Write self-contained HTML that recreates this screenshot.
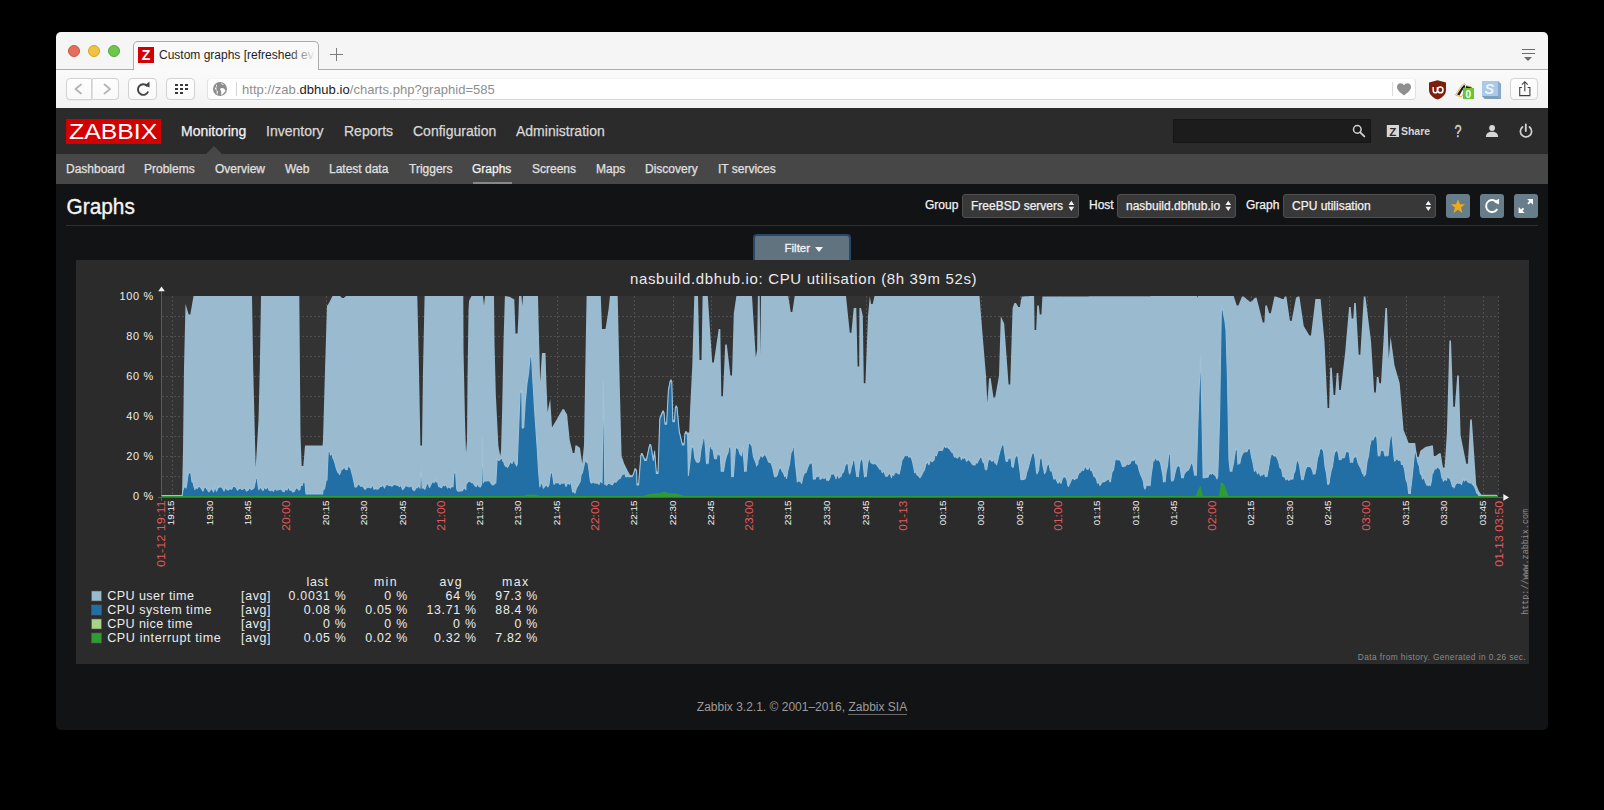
<!DOCTYPE html>
<html><head><meta charset="utf-8">
<style>
*{margin:0;padding:0;box-sizing:border-box}
html,body{width:1604px;height:810px;background:#000;overflow:hidden;font-family:"Liberation Sans",sans-serif}
.nav,.snav,.sel,.lbl{-webkit-text-stroke:0.25px currentColor}
.a{position:absolute}
#win{position:absolute;left:56px;top:32px;width:1492px;height:698px;border-radius:5px;overflow:hidden;background:#121314}
#tabbar{position:absolute;left:0;top:0;width:1492px;height:38px;background:#f5f5f5;border-bottom:1px solid #acacac}
#toolbar{position:absolute;left:0;top:38px;width:1492px;height:38px;background:linear-gradient(#fafafa,#f3f3f3)}
.tl{position:absolute;top:13px;width:12px;height:12px;border-radius:50%}
.btn{position:absolute;top:8px;height:22px;background:#fdfdfd;border:1px solid #d4d4d4;border-radius:4px}
#hdr{position:absolute;left:0;top:76px;width:1492px;height:46px;background:#2b2b2b}
#sub{position:absolute;left:0;top:122px;width:1492px;height:30px;background:#474747}
.nav{position:absolute;top:15px;font-size:14px;color:#d8d8d8;white-space:nowrap}
.snav{position:absolute;top:8px;font-size:12px;color:#e0e0e0;white-space:nowrap}
.sel{position:absolute;top:162px;height:24px;background:#383838;border:1px solid #4f4f4f;border-radius:3px;color:#f2f2f2;font-size:12px;padding:4px 0 0 8px;white-space:nowrap}
.lbl{position:absolute;top:166px;font-size:12px;color:#f2f2f2;white-space:nowrap}
.ib{position:absolute;top:162px;width:24px;height:24px;background:#677d8a;border-radius:3px}
</style></head><body>
<div id="win">
 <div id="tabbar">
  <div class="tl" style="left:12px;background:#e2705c;border:1px solid #cc5640"></div>
  <div class="tl" style="left:32px;background:#efc23f;border:1px solid #d6a32a"></div>
  <div class="tl" style="left:52px;background:#6fc64f;border:1px solid #53a936"></div>
  <div class="a" style="left:77px;top:9px;width:186px;height:30px;background:#f9f9f9;border:1px solid #acacac;border-bottom:none;border-radius:5px 5px 0 0"></div>
  <div class="a" style="left:82px;top:15px;width:16px;height:16px;background:#d40000;color:#fff;font:bold 14px/16px 'Liberation Sans',sans-serif;text-align:center">Z</div>
  <div class="a" style="left:103px;top:16px;font-size:12px;color:#1e1e1e;white-space:nowrap;width:156px;overflow:hidden">Custom graphs [refreshed ev</div>
  <div class="a" style="left:232px;top:12px;width:28px;height:20px;background:linear-gradient(90deg,rgba(249,249,249,0),#f9f9f9)"></div>
  <div class="a" style="left:274px;top:22px;width:13px;height:1px;background:#7c7c7c"></div>
  <div class="a" style="left:280px;top:16px;width:1px;height:13px;background:#7c7c7c"></div>
  <div class="a" style="left:1466px;top:17px;width:13px;height:1px;background:#6d6d6d"></div>
  <div class="a" style="left:1466px;top:21px;width:13px;height:1px;background:#6d6d6d"></div>
  <div class="a" style="left:1468px;top:25px;width:0;height:0;border-left:4.5px solid transparent;border-right:4.5px solid transparent;border-top:4px solid #6d6d6d"></div>
 </div>
 <div id="toolbar">
    <div class="a" style="left:10px;top:8px;width:26px;height:22px;background:linear-gradient(#fefefe,#f9f9f9);border:1px solid #d2d2d2;border-radius:4px 0 0 4px;box-shadow:0 1px 0 rgba(0,0,0,0.04)"></div>
  <div class="a" style="left:36px;top:8px;width:27px;height:22px;background:linear-gradient(#fefefe,#f9f9f9);border:1px solid #d2d2d2;border-left-color:#dedede;border-radius:0 4px 4px 0"></div>
  <svg class="a" style="left:0;top:0" width="220" height="38">
   <path d="M25 14.5 L19.5 19 L25 23.5" stroke="#b4b4b4" stroke-width="1.8" fill="none" stroke-linecap="round" stroke-linejoin="round"/>
   <path d="M48.5 14.5 L54 19 L48.5 23.5" stroke="#b4b4b4" stroke-width="1.8" fill="none" stroke-linecap="round" stroke-linejoin="round"/>
  </svg>
  <div class="a" style="left:72px;top:8px;width:29px;height:22px;background:linear-gradient(#fefefe,#f9f9f9);border:1px solid #d2d2d2;border-radius:4px"></div>
  <div class="a" style="left:110px;top:8px;width:29px;height:22px;background:linear-gradient(#fefefe,#f9f9f9);border:1px solid #d2d2d2;border-radius:4px"></div>
  <svg class="a" style="left:0;top:0" width="220" height="38">
   <path d="M91.2 16.0 A5.3 5.3 0 1 0 92.2 21.5" stroke="#454545" stroke-width="1.9" fill="none"/>
   <polygon points="88.5,15.5 93.5,11.5 93.5,17.5" fill="#454545"/>
   <g fill="#383838">
    <rect x="119" y="14" width="3" height="2"/><rect x="124" y="14" width="3" height="2"/><rect x="129" y="14" width="3" height="2"/>
    <rect x="119" y="18" width="3" height="2"/><rect x="124" y="18" width="3" height="2"/><rect x="129" y="18" width="3" height="2"/>
    <rect x="119" y="22" width="3" height="2"/><rect x="124" y="22" width="3" height="2"/>
   </g>
  </svg>
  <div class="a" style="left:151px;top:8px;width:1209px;height:22px;background:#fff;border:1px solid #e2e2e2;border-top-color:#f3f3f3;border-bottom-color:#d6d6d6;border-radius:4px"></div>
  <svg class="a" style="left:150px;top:8px" width="40" height="22">
   <circle cx="14" cy="11" r="7" fill="#8d8d8d"/>
   <path d="M10 6.5 C12 7.5 11 9 9.5 9.5 C8.5 10 9 12 11 12.5 C12.5 13 12 15 11 17 M15 5 C15 6.5 17 7 18 6.5 M16 10 C17.5 10 19 11 19.5 13 C18 15 16.5 16 15.5 17.5 C15 15.5 15.5 13 14.5 12 C13.5 11 14.5 10 16 10Z" fill="#fff" stroke="none"/>
   <rect x="30" y="4" width="1" height="14" fill="#d4d4d4"/>
  </svg>
  <div class="a" style="left:186px;top:12px;font-size:13px;color:#8e8e8e;white-space:nowrap;letter-spacing:0.04px">http://zab.<span style="color:#1a1a1a">dbhub.io</span>/charts.php?graphid=585</div>
  <svg class="a" style="left:1330px;top:8px" width="34" height="22">
   <rect x="6" y="4" width="1" height="14" fill="#dadada"/>
   <path d="M18 17.5 C15 15 11 12.5 11 9 C11 6.8 12.6 5.2 14.5 5.2 C16 5.2 17.2 6 18 7.2 C18.8 6 20 5.2 21.5 5.2 C23.4 5.2 25 6.8 25 9 C25 12.5 21 15 18 17.5Z" fill="#8f8f8f"/>
  </svg>
  <svg class="a" style="left:1368px;top:8px" width="124" height="24">
   <path d="M5 4.5 L13.5 2.3 L22 4.5 L22 12 C22 17 17.5 20 13.5 21.6 C9.5 20 5 17 5 12Z" fill="#7e1f0e"/>
   <path d="M9.2 9 V12.2 C9.2 14.2 10.2 14.8 11.3 14.8 C12.4 14.8 13.4 14.2 13.4 12.2 V9" stroke="#fff" stroke-width="1.5" fill="none"/>
   <ellipse cx="16.3" cy="11.9" rx="2.7" ry="2.9" stroke="#fff" stroke-width="1.5" fill="none"/>
   <path d="M31.5 17 L37 8.5 L40.5 5.5 L42 7.5 L47 8.8 L49 11 L46 12.5 L41 12 L37.5 19Z" fill="#fff" stroke="#e89a2c" stroke-width="0.8"/>
   <path d="M33 16.5 L37.8 9.3 L40.5 6.5 L41.2 9 L38.2 12.5 L35.5 17.5Z" fill="#1c1c1c"/>
   <path d="M42 8 L47.5 9.5 L48 11 L45 11 L41.5 10.5Z" fill="#1c1c1c"/>
   <rect x="39" y="10" width="11" height="11" fill="#65c738"/>
   <text x="41.5" y="19.5" font-family="Liberation Sans" font-size="10" font-weight="bold" fill="#fff">0</text>
   <path d="M58 3 H74 L77 6 V21 H61 L58 18Z" fill="#8fb2cf"/>
   <rect x="58" y="3" width="16" height="15" fill="#a9c9e8"/>
   <path d="M74 3 L77 6 V21 L74 18Z" fill="#86aac6"/>
   <path d="M58 18 H74 L77 21 H61Z" fill="#7d9fba"/>
   <text x="60.5" y="15.8" font-family="Liberation Sans" font-size="14.5" font-weight="bold" font-style="italic" fill="#eef5fb">S</text>
  </svg>
  <div class="a" style="left:1454px;top:8px;width:28px;height:22px;background:linear-gradient(#fefefe,#f9f9f9);border:1px solid #d2d2d2;border-radius:4px"></div>
  <svg class="a" style="left:1454px;top:8px" width="28" height="22">
   <path d="M12 9.5 H9.7 V17.6 H19.9 V9.5 H17.6" stroke="#404040" stroke-width="1.1" fill="none"/>
   <path d="M14.8 13.2 V3.8 M11.9 6.6 L14.8 3.7 L17.7 6.6" stroke="#404040" stroke-width="1.1" fill="none"/>
  </svg>

 </div>
 <div id="hdr">
  <div class="a" style="left:10px;top:11px;width:95px;height:25px;background:#d40000"></div>
  <svg class="a" style="left:10px;top:11px" width="95" height="25"><text x="3" y="20.4" font-family="Liberation Sans" font-size="22.4" fill="#fff" textLength="88.2" lengthAdjust="spacingAndGlyphs">ZABBIX</text></svg>
  <div class="nav" style="left:125px;color:#f2f2f2">Monitoring</div>
  <div class="nav" style="left:210px">Inventory</div>
  <div class="nav" style="left:288px">Reports</div>
  <div class="nav" style="left:357px">Configuration</div>
  <div class="nav" style="left:460px">Administration</div>
  <div class="a" style="left:150px;top:38px;width:0;height:0;border-left:8px solid transparent;border-right:8px solid transparent;border-bottom:8px solid #474747"></div>
  <div class="a" style="left:1117px;top:11px;width:198px;height:24px;background:#1c1c1c;border:1px solid #161616"></div>
    <svg class="a" style="left:1280px;top:0" width="212" height="46">
   <circle cx="21.3" cy="21.4" r="3.8" stroke="#d2d2d2" stroke-width="1.5" fill="none"/>
   <path d="M24.2 24.3 L28.3 28.4" stroke="#d2d2d2" stroke-width="1.9" stroke-linecap="round"/>
   <rect x="50.8" y="17" width="12.2" height="12" fill="#d6d6d6"/>
   <text x="53.2" y="27.6" font-family="Liberation Sans" font-size="11.5" font-weight="bold" fill="#2b2b2b">Z</text>
   <text x="64.9" y="26.8" font-family="Liberation Sans" font-size="11.5" font-weight="bold" fill="#d6d6d6" textLength="29.2" lengthAdjust="spacingAndGlyphs">Share</text>
   <text x="118.6" y="29" font-family="Liberation Sans" font-size="16.5" fill="#d2d2d2" stroke="#d2d2d2" stroke-width="0.45" textLength="7" lengthAdjust="spacingAndGlyphs">?</text>
  </svg>
  <svg class="a" style="left:1420px;top:0" width="72" height="46">
   <circle cx="16.1" cy="20" r="2.9" fill="#d6d6d6"/>
   <path d="M9.9 29 C9.9 25.5 12.5 23.7 16.1 23.7 C19.7 23.7 22.1 25.5 22.1 29Z" fill="#d6d6d6"/>
   <path d="M46.5 19 A5.6 5.6 0 1 0 53.5 19" stroke="#d2d2d2" stroke-width="1.7" fill="none" stroke-linecap="round"/>
   <path d="M49.8 16.5 V23" stroke="#d2d2d2" stroke-width="1.8" stroke-linecap="round"/>
  </svg>

 </div>
 <div id="sub">
  <div class="snav" style="left:10px">Dashboard</div>
  <div class="snav" style="left:88px">Problems</div>
  <div class="snav" style="left:159px">Overview</div>
  <div class="snav" style="left:229px">Web</div>
  <div class="snav" style="left:273px">Latest data</div>
  <div class="snav" style="left:353px">Triggers</div>
  <div class="snav" style="left:416px;color:#f2f2f2">Graphs</div>
  <div class="snav" style="left:476px">Screens</div>
  <div class="snav" style="left:540px">Maps</div>
  <div class="snav" style="left:589px">Discovery</div>
  <div class="snav" style="left:662px">IT services</div>
  <div class="a" style="left:417px;top:28px;width:39px;height:2px;background:#888"></div>
 </div>
 <svg class="a" style="left:10px;top:160px" width="100" height="30"><text x="0.5" y="22" font-family="Liberation Sans" font-size="22.2" fill="#f4f4f4" stroke="#f4f4f4" stroke-width="0.35" textLength="68.3" lengthAdjust="spacingAndGlyphs">Graphs</text></svg>
 <div class="a" style="left:10px;top:193px;width:1472px;height:1px;background:#2e2e2e"></div>
 <div class="lbl" style="left:869px">Group</div>
 <div class="sel" style="left:906px;width:117px">FreeBSD servers</div>
 <div class="lbl" style="left:1033px">Host</div>
 <div class="sel" style="left:1061px;width:119px">nasbuild.dbhub.io</div>
 <div class="lbl" style="left:1190px">Graph</div>
 <div class="sel" style="left:1227px;width:153px">CPU utilisation</div>
  <svg class="a" style="left:0;top:160px;z-index:2" width="1492" height="30">
  <g fill="#f2f2f2">
   <polygon points="1012.5,13 1018.2,13 1015.35,8.7"/><polygon points="1012.5,14.8 1018.2,14.8 1015.35,19.1"/>
   <polygon points="1169.4,13 1175.1,13 1172.25,8.7"/><polygon points="1169.4,14.8 1175.1,14.8 1172.25,19.1"/>
   <polygon points="1369.5,13 1375.2,13 1372.35,8.7"/><polygon points="1369.5,14.8 1375.2,14.8 1372.35,19.1"/>
  </g>
  <polygon points="1402,7.2 1403.9,12.2 1409,12.3 1405,15.5 1406.5,20.9 1402,17.8 1397.5,20.9 1399,15.5 1395,12.3 1400.1,12.2" fill="#f0ac17"/>
  <path d="M1441.3 17 A6 6 0 1 1 1440.2 9.6" stroke="#fff" stroke-width="1.9" fill="none"/>
  <polygon points="1437.5,9.8 1443.2,6.8 1442.8,12.5" fill="#fff"/>
  <path d="M1463.8 20 L1467.5 16.3 M1472 11.8 L1475.7 8.1" stroke="#fff" stroke-width="1.9"/>
  <polygon points="1471.2,7 1477,7 1477,12.8" fill="#fff"/>
  <polygon points="1462.6,15 1462.6,21 1468.6,21" fill="#fff"/>
 </svg>

 <div class="ib" style="left:1390px"></div>
 <div class="ib" style="left:1424px"></div>
 <div class="ib" style="left:1458px"></div>
 <div class="a" style="left:697px;top:202px;width:98px;height:26px;background:#627380;border:2px solid #27486a;border-bottom:none;border-radius:4px 4px 0 0"></div>
 <div class="a" style="left:728.5px;top:210px;font-size:11.5px;color:#f4f4f4;-webkit-text-stroke:0.3px #f4f4f4;letter-spacing:0">Filter</div>
 <div class="a" style="left:758.8px;top:214.7px;width:0;height:0;border-left:4.1px solid transparent;border-right:4.1px solid transparent;border-top:5.6px solid #f2f2f2"></div>
 <svg class="a" style="left:20px;top:228px" width="1453" height="404" viewBox="76 260 1453 404">
<rect x="76" y="260" width="1453" height="404" fill="#2b2b2b"/>
<rect x="161.5" y="296" width="1337" height="200" fill="#333333"/>
<path d="M162 316.5H1498M162 336.5H1498M162 356.5H1498M162 376.5H1498M162 396.5H1498M162 416.5H1498M162 436.5H1498M162 456.5H1498M162 476.5H1498M172.5 296V496M210.5 296V496M249.5 296V496M287.5 296V496M326.5 296V496M364.5 296V496M403.5 296V496M441.5 296V496M480.5 296V496M519.5 296V496M557.5 296V496M596.5 296V496M634.5 296V496M673.5 296V496M711.5 296V496M750.5 296V496M789.5 296V496M827.5 296V496M866.5 296V496M904.5 296V496M943.5 296V496M981.5 296V496M1020.5 296V496M1059.5 296V496M1097.5 296V496M1136.5 296V496M1174.5 296V496M1213.5 296V496M1251.5 296V496M1290.5 296V496M1329.5 296V496M1367.5 296V496M1406.5 296V496M1444.5 296V496M1483.5 296V496M1498.5 296V496" stroke="#4e4e4e" stroke-width="1" stroke-dasharray="2,2" fill="none"/>
<polygon points="182.0,496.0 182.0,496.0 183.0,450.0 183.5,409.0 184.0,368.0 185.0,325.3 185.5,304.0 186.0,305.6 186.5,307.3 188.0,312.2 188.7,314.5 189.0,314.5 189.5,314.5 190.3,314.5 190.6,312.8 191.0,310.5 192.0,304.7 192.5,301.8 193.5,296.0 194.0,296.0 195.0,296.0 195.5,296.0 197.0,296.0 198.5,296.0 200.0,296.0 201.5,296.0 203.0,296.0 204.5,296.0 206.0,296.0 207.5,296.0 209.0,296.0 210.5,296.0 212.0,296.0 213.5,296.0 215.0,296.0 216.5,296.0 218.0,296.0 219.5,296.0 221.0,296.0 222.5,296.0 224.0,296.0 225.5,296.0 227.0,296.0 228.5,296.0 230.0,296.0 231.5,296.0 233.0,296.0 234.5,296.0 236.0,296.0 237.5,296.0 239.0,296.0 240.5,296.0 242.0,296.0 243.5,296.0 245.0,296.0 246.5,296.0 248.0,296.0 249.5,296.0 251.0,296.0 252.0,296.0 252.5,326.0 253.2,368.0 254.0,400.0 254.5,420.0 255.5,459.7 255.7,467.6 257.0,445.5 257.3,440.4 258.5,420.0 259.0,400.0 259.8,368.0 260.0,356.0 261.0,296.0 261.5,296.0 263.0,296.0 264.5,296.0 266.0,296.0 267.5,296.0 269.0,296.0 270.5,296.0 272.0,296.0 273.5,296.0 275.0,296.0 276.5,296.0 278.0,296.0 279.5,296.0 281.0,296.0 282.5,296.0 284.0,296.0 285.5,296.0 287.0,296.0 288.5,296.0 290.0,296.0 291.5,296.0 293.0,296.0 294.5,296.0 296.0,296.0 297.5,296.0 299.0,296.0 299.3,296.0 300.0,377.1 300.5,435.0 301.7,466.0 302.0,466.0 303.3,466.0 303.5,463.6 304.5,451.6 305.0,445.6 306.0,445.6 306.5,445.6 308.0,445.6 309.5,445.6 311.0,445.6 312.5,445.6 314.0,445.6 315.5,445.6 317.0,445.6 318.5,445.6 320.0,445.6 321.5,445.6 322.5,445.6 322.6,445.6 323.0,439.6 324.5,387.4 325.0,370.0 326.0,338.0 327.0,306.0 327.5,305.2 328.2,304.2 329.0,303.0 329.8,301.4 330.5,300.0 332.0,297.0 332.5,296.0 333.0,296.0 333.5,296.0 335.0,296.0 336.5,296.0 338.0,296.0 338.7,296.0 339.5,296.0 340.0,296.0 340.3,296.3 341.0,296.9 342.2,298.0 342.5,298.0 343.8,298.0 344.0,297.8 344.7,297.2 345.5,296.5 346.0,296.0 347.0,296.0 348.5,296.0 349.9,296.0 350.0,296.0 351.5,296.0 353.0,296.0 354.5,296.0 355.0,296.0 356.0,296.0 357.5,296.0 359.0,296.0 360.5,296.0 362.0,296.0 363.5,296.0 365.0,296.0 366.5,296.0 368.0,296.0 369.5,296.0 371.0,296.0 372.5,296.0 374.0,296.0 375.5,296.0 377.0,296.0 378.5,296.0 380.0,296.0 381.5,296.0 383.0,296.0 384.5,296.0 386.0,296.0 387.5,296.0 389.0,296.0 390.5,296.0 392.0,296.0 393.5,296.0 395.0,296.0 396.5,296.0 398.0,296.0 399.5,296.0 401.0,296.0 402.5,296.0 404.0,296.0 405.5,296.0 407.0,296.0 408.5,296.0 410.0,296.0 411.5,296.0 413.0,296.0 414.5,296.0 416.0,296.0 417.3,296.0 417.5,304.7 419.0,370.0 420.0,424.0 420.4,445.6 420.5,445.6 421.0,445.6 422.0,445.6 422.2,430.5 423.0,370.0 423.5,346.9 423.8,333.0 424.6,296.0 425.0,296.0 426.5,296.0 428.0,296.0 429.5,296.0 431.0,296.0 432.5,296.0 434.0,296.0 435.5,296.0 436.0,296.0 437.0,296.0 437.6,296.0 438.5,296.0 440.0,296.0 441.5,296.0 443.0,296.0 444.5,296.0 446.0,296.0 447.5,296.0 449.0,296.0 450.5,296.0 452.0,296.0 453.0,296.0 453.5,296.0 454.0,296.0 455.0,296.0 455.6,296.0 456.5,296.0 456.9,296.0 458.0,296.0 459.5,296.0 461.0,296.0 462.5,296.0 463.3,296.0 463.5,350.0 464.0,373.3 465.0,420.0 465.5,436.5 465.9,449.7 466.0,453.0 467.0,440.0 467.5,380.0 468.5,310.0 469.0,301.0 470.0,299.0 471.5,296.0 473.0,296.0 474.5,296.0 476.0,296.0 477.5,296.0 479.0,296.0 480.5,296.0 481.5,296.0 482.0,296.0 482.3,296.0 483.0,296.0 483.3,298.9 483.5,300.8 484.0,305.5 485.0,296.0 486.5,296.0 488.0,296.0 489.5,296.0 491.0,296.0 492.5,296.0 494.0,296.0 494.5,342.0 495.5,382.0 495.8,394.0 497.0,418.0 497.1,420.0 498.4,446.0 498.5,446.6 500.0,454.9 500.2,456.0 501.0,451.0 501.5,432.7 502.2,407.0 503.0,367.0 503.5,342.0 503.6,338.7 504.5,309.1 504.9,296.0 506.0,296.2 506.6,296.3 507.5,296.5 508.2,296.6 509.0,296.8 510.0,297.0 510.5,297.3 512.0,298.2 513.1,298.8 513.5,299.0 514.3,299.5 514.7,310.8 515.0,319.3 515.5,333.5 515.7,333.5 516.5,333.5 517.3,333.5 517.5,333.5 518.0,323.8 518.4,316.0 519.0,296.0 519.5,296.0 520.2,296.0 521.0,296.0 521.5,296.0 521.8,299.7 522.2,304.8 522.3,306.0 522.5,303.1 523.0,296.0 523.8,296.0 524.0,296.0 525.5,296.0 525.6,296.0 527.0,296.0 528.5,296.0 530.0,296.0 531.5,296.0 531.6,296.0 533.0,296.0 533.4,296.0 534.5,296.0 536.0,296.0 537.5,296.0 538.0,296.0 538.6,321.5 538.8,330.0 539.0,337.4 539.9,370.9 540.2,382.0 540.5,376.9 541.5,360.0 542.0,353.0 543.5,353.0 545.0,353.0 545.5,353.0 546.3,380.0 546.5,384.9 547.6,412.0 548.0,410.0 549.0,405.0 549.5,402.5 550.2,399.0 550.7,406.9 551.0,411.6 552.0,427.4 552.3,426.9 552.5,426.6 554.0,424.1 555.5,421.6 556.7,419.6 557.0,419.1 558.5,416.3 560.0,413.6 561.5,410.9 562.4,409.3 563.0,409.3 564.0,409.3 564.5,410.1 566.0,412.7 567.1,414.5 567.5,418.4 569.0,433.1 569.7,440.0 570.5,443.4 571.0,445.5 572.0,449.6 572.8,453.0 573.5,453.0 574.4,453.0 575.0,448.6 575.4,445.6 576.5,445.6 577.0,445.6 578.0,446.4 579.5,447.6 580.0,448.0 580.1,448.7 581.0,455.1 582.2,463.7 582.5,460.6 584.0,445.0 585.3,368.0 585.5,356.9 585.8,340.3 586.6,296.0 587.0,296.0 587.4,296.0 588.5,296.0 590.0,296.0 590.5,296.0 591.5,296.0 593.0,296.0 594.5,296.0 594.8,296.0 596.0,296.0 596.4,296.0 597.5,296.0 599.0,296.0 600.5,296.0 600.8,296.0 602.0,329.0 603.4,329.0 603.5,329.0 604.8,329.0 605.0,329.0 605.5,329.0 606.0,326.0 606.5,322.7 608.0,312.9 608.6,309.0 609.5,300.6 610.0,296.0 611.0,296.0 612.5,296.0 614.0,296.0 615.5,296.0 616.4,296.0 617.0,296.0 617.7,296.0 618.5,332.2 619.0,354.8 620.0,394.7 620.3,406.7 621.5,452.2 621.6,456.0 623.0,460.1 623.4,461.3 624.2,463.7 624.5,464.3 625.0,465.3 626.0,467.3 627.5,470.3 628.1,471.5 628.6,472.3 629.0,473.0 630.2,475.0 630.5,474.9 631.2,475.1 632.0,475.4 632.8,474.1 633.5,472.9 634.6,469.1 635.0,468.0 636.5,469.0 636.6,469.0 637.0,483.0 638.0,483.0 638.6,483.0 639.5,471.3 640.9,453.0 641.0,453.0 642.5,453.0 644.0,456.6 644.8,458.5 645.5,458.5 646.4,458.5 647.0,455.6 648.5,448.4 649.4,444.0 650.0,444.0 651.0,444.0 651.5,447.2 653.0,456.6 653.3,458.5 654.5,450.1 654.6,449.4 656.0,466.6 656.4,471.5 657.5,471.5 658.0,471.5 659.0,441.2 659.8,417.0 660.5,415.3 662.0,411.6 662.4,410.6 663.5,410.6 664.0,410.6 665.0,422.2 666.5,422.2 666.6,422.2 668.0,396.0 668.4,388.5 669.5,382.9 670.2,379.4 671.0,379.4 671.8,379.4 672.5,407.5 672.8,419.6 674.0,419.6 674.4,419.6 675.4,405.4 675.5,405.4 677.0,405.4 678.5,421.4 679.3,430.0 680.0,432.9 681.5,439.2 682.4,443.0 683.0,443.0 684.0,443.0 684.5,437.1 685.0,431.3 686.0,431.3 686.6,431.3 687.5,432.5 687.6,432.6 688.4,432.6 689.0,432.6 689.2,432.6 690.2,406.7 690.5,400.8 691.5,381.0 692.0,371.1 692.3,365.2 693.1,337.5 693.5,323.7 694.3,296.0 694.9,296.0 695.0,296.0 696.5,296.0 697.9,296.0 698.0,296.0 699.5,360.0 701.0,360.0 701.5,360.0 702.5,301.8 702.6,296.0 703.1,296.0 704.0,296.0 704.7,296.0 705.5,296.0 706.5,296.0 707.0,296.0 707.8,296.0 708.1,300.5 708.5,306.6 709.6,323.2 710.0,329.3 711.2,347.5 711.5,352.0 712.2,362.6 713.0,362.6 713.8,362.6 714.5,357.8 714.8,355.7 716.0,347.5 716.4,344.8 717.5,337.2 718.7,329.0 719.0,329.0 720.3,329.0 720.5,342.5 721.3,396.3 722.0,396.3 722.9,396.3 723.5,382.8 725.0,348.9 725.2,344.4 726.5,344.4 726.8,344.4 728.0,354.8 729.1,364.3 729.5,367.8 730.4,375.6 730.7,375.6 731.0,375.6 731.7,375.6 732.0,375.6 732.5,358.3 733.3,330.6 733.8,313.3 734.0,312.0 735.5,302.0 735.6,301.3 736.4,296.0 737.0,296.0 737.2,296.0 738.5,296.0 740.0,296.0 741.5,296.0 742.8,296.0 743.0,296.0 744.5,296.0 744.6,296.0 746.0,296.0 746.2,296.0 747.5,296.0 748.5,296.0 749.0,296.0 750.1,296.0 750.5,296.0 752.0,296.0 753.5,320.2 755.0,344.5 755.8,357.4 756.3,354.6 756.5,353.4 757.1,350.0 757.9,296.0 758.0,296.0 759.5,296.0 759.7,296.0 760.3,354.8 761.0,296.0 761.5,296.0 762.5,296.0 763.1,296.0 764.0,296.0 765.5,296.0 767.0,296.0 768.5,296.0 770.0,296.0 770.1,296.0 771.5,296.0 773.0,296.0 774.5,296.0 776.0,296.0 776.1,296.0 777.5,296.0 779.0,296.0 779.7,296.0 780.5,296.0 781.3,296.0 782.0,296.0 783.5,296.0 784.8,296.0 785.0,296.0 786.4,296.0 786.5,296.0 788.0,296.0 788.2,296.0 789.5,304.3 790.7,312.0 791.0,312.0 792.3,312.0 792.5,310.7 792.6,310.0 794.0,300.7 794.2,299.3 794.7,296.0 795.5,296.0 797.0,296.0 797.3,296.0 798.5,296.0 800.0,296.0 801.2,296.0 801.5,296.0 803.0,296.0 804.5,296.0 806.0,296.0 807.5,296.0 809.0,296.0 810.5,296.0 810.8,296.0 812.0,296.0 812.4,296.0 813.4,296.0 813.5,296.0 815.0,296.0 816.5,296.0 818.0,296.0 819.4,296.0 819.5,296.0 820.0,296.0 821.0,296.0 822.5,296.0 824.0,296.0 825.5,296.0 827.0,296.0 828.5,296.0 828.6,296.0 830.0,296.0 830.9,296.0 831.5,296.0 832.5,296.0 833.0,296.0 834.5,296.0 835.6,296.0 836.0,296.0 837.5,296.0 839.0,296.0 840.5,296.0 840.8,296.0 842.0,296.0 843.5,296.0 845.0,296.0 846.0,296.0 846.4,299.9 846.5,300.8 848.0,315.4 849.0,325.1 849.5,329.9 849.8,332.8 850.6,332.8 851.0,332.8 851.4,332.8 852.5,320.9 852.9,316.6 853.7,308.0 854.0,308.0 854.5,308.0 855.5,308.0 856.3,308.0 856.8,330.5 857.0,339.5 857.6,366.5 858.4,366.5 858.5,366.5 859.2,366.5 859.4,308.0 860.0,308.0 860.7,308.0 861.0,308.0 861.5,310.2 862.3,313.8 862.8,316.0 863.0,329.5 863.8,383.3 864.5,383.3 864.6,383.3 865.4,383.3 866.0,367.8 866.2,362.6 867.5,328.9 868.0,316.0 868.5,310.6 869.0,305.2 869.8,296.5 870.1,298.2 870.5,300.5 871.1,304.0 872.0,304.0 872.7,304.0 873.5,300.4 874.5,296.0 875.0,296.0 876.5,296.0 878.0,296.0 879.5,296.0 881.0,296.0 882.3,296.0 882.5,296.0 884.0,296.0 885.5,296.0 887.0,296.0 888.5,296.0 890.0,296.0 891.5,296.0 891.8,296.0 893.0,296.0 893.4,296.0 894.5,296.0 896.0,296.0 897.5,296.0 899.0,296.0 899.1,296.0 900.5,296.0 902.0,296.0 903.0,296.0 903.5,296.0 905.0,296.0 906.5,296.0 908.0,296.0 908.7,296.0 909.5,296.0 910.3,296.0 911.0,296.0 912.5,296.0 914.0,296.0 914.7,296.0 915.5,296.0 917.0,296.0 918.5,296.0 919.1,296.0 920.0,296.0 920.7,296.0 921.5,296.0 923.0,296.0 924.5,296.0 926.0,296.0 926.4,296.0 927.5,296.0 929.0,296.0 930.5,296.0 932.0,296.0 933.5,296.0 934.1,296.0 935.0,296.0 936.5,296.0 938.0,296.0 939.5,296.0 941.0,296.0 942.5,296.0 944.0,296.0 945.5,296.0 947.0,296.0 947.6,296.0 948.5,296.0 949.2,296.0 950.0,296.0 951.5,296.0 953.0,296.0 954.5,296.0 954.9,296.0 956.0,296.0 957.5,296.0 959.0,296.0 960.5,296.0 961.4,296.0 962.0,296.0 963.5,296.0 965.0,296.0 966.5,296.0 968.0,296.0 969.2,296.0 969.5,296.0 971.0,296.0 972.5,296.0 973.5,296.0 974.0,296.0 975.1,296.0 975.5,296.0 977.0,296.0 978.5,296.0 979.5,296.0 980.0,302.3 981.5,321.4 981.6,322.7 982.1,329.0 983.0,339.8 984.5,357.7 985.2,366.0 986.0,375.6 986.8,392.3 987.3,402.8 987.5,400.1 989.0,379.6 989.1,378.2 990.5,378.2 990.7,378.2 992.0,387.2 993.5,397.6 995.0,397.6 995.1,397.6 995.6,394.8 996.5,389.7 997.2,385.8 998.0,381.2 999.0,375.6 999.5,359.0 1000.8,316.0 1001.0,316.5 1002.1,318.9 1002.5,319.9 1003.7,322.6 1004.0,323.2 1004.2,323.7 1005.5,341.7 1006.0,348.6 1007.0,362.5 1007.6,370.8 1008.5,383.2 1008.6,384.6 1009.2,384.6 1010.0,384.6 1010.2,384.6 1010.8,365.5 1011.5,343.1 1011.8,333.5 1012.6,308.0 1013.0,306.9 1013.4,305.8 1014.4,303.0 1014.5,303.0 1015.7,303.0 1016.0,303.0 1017.3,305.2 1017.5,305.5 1018.3,306.9 1019.0,306.9 1019.9,306.9 1020.5,303.4 1020.9,301.1 1021.7,296.5 1022.0,296.5 1022.5,296.5 1023.5,296.4 1025.0,296.3 1025.6,296.3 1026.5,296.3 1028.0,296.2 1029.5,296.1 1031.0,296.1 1032.5,296.0 1034.0,296.0 1034.1,296.0 1034.6,330.0 1035.5,330.0 1036.2,330.0 1036.4,325.1 1037.0,310.5 1037.2,305.6 1038.0,305.6 1038.5,305.6 1038.8,305.6 1039.8,314.6 1040.0,314.6 1040.3,314.6 1041.4,314.6 1041.5,312.8 1041.9,305.6 1042.4,296.5 1043.0,296.5 1044.2,296.5 1044.5,296.5 1045.8,296.5 1046.0,296.5 1047.5,296.5 1047.6,296.5 1049.0,296.5 1049.2,296.5 1050.5,296.5 1052.0,296.5 1053.5,296.5 1054.1,296.5 1055.0,296.5 1056.5,296.5 1058.0,296.4 1059.5,296.4 1059.8,296.4 1061.0,296.4 1061.4,296.4 1062.5,296.4 1063.7,296.4 1064.0,296.4 1065.3,296.4 1065.5,296.4 1067.0,296.4 1067.6,296.4 1068.5,296.4 1069.2,296.4 1070.0,296.4 1071.5,296.4 1073.0,296.4 1074.5,296.4 1076.0,296.4 1077.4,296.4 1077.5,296.4 1079.0,296.4 1080.5,296.4 1082.0,296.4 1083.5,296.4 1084.4,296.4 1085.0,296.4 1086.0,296.4 1086.5,296.4 1088.0,296.4 1089.5,296.3 1091.0,296.3 1091.7,296.3 1092.5,296.3 1094.0,296.3 1095.5,296.3 1097.0,296.3 1097.4,296.3 1098.5,296.3 1099.0,296.3 1100.0,296.3 1101.5,296.3 1103.0,296.3 1104.5,296.3 1106.0,296.3 1107.5,296.3 1109.0,296.3 1109.9,296.3 1110.5,296.3 1112.0,296.3 1113.5,296.3 1115.0,296.3 1115.6,296.3 1116.5,296.3 1117.2,296.3 1118.0,296.3 1119.5,296.3 1121.0,296.2 1122.5,296.2 1123.3,296.2 1124.0,296.2 1124.9,296.2 1125.5,296.2 1127.0,296.2 1128.5,296.2 1130.0,296.2 1131.5,296.2 1132.4,296.2 1133.0,296.2 1134.0,296.2 1134.5,296.2 1136.0,296.2 1137.5,296.2 1138.4,296.2 1139.0,296.2 1140.5,296.2 1142.0,296.2 1143.5,296.2 1144.1,296.2 1145.0,296.2 1145.7,296.2 1146.5,296.2 1148.0,296.2 1149.5,296.2 1150.1,296.2 1151.0,296.1 1152.5,296.1 1153.2,296.1 1154.0,296.1 1154.8,296.1 1155.5,296.1 1157.0,296.1 1158.5,296.1 1160.0,296.1 1160.5,296.1 1161.5,296.1 1163.0,296.1 1163.5,296.1 1164.5,296.1 1165.1,296.1 1166.0,296.1 1167.5,296.1 1168.7,296.1 1169.0,296.1 1170.3,296.1 1170.5,296.1 1171.3,296.1 1172.0,296.1 1172.9,296.1 1173.5,296.1 1175.0,296.1 1176.5,296.1 1177.8,296.1 1178.0,296.1 1179.4,296.1 1179.5,296.1 1181.0,296.1 1181.7,296.0 1182.5,296.0 1183.3,296.0 1184.0,296.0 1185.5,296.0 1187.0,296.0 1188.5,296.0 1190.0,296.0 1190.8,296.0 1191.5,296.0 1192.4,296.0 1193.0,296.0 1194.5,296.0 1194.7,296.0 1196.0,296.0 1196.3,296.0 1197.0,296.0 1197.5,298.0 1198.0,296.0 1199.0,296.0 1200.5,296.0 1200.7,296.0 1202.0,296.0 1203.2,296.0 1203.5,296.0 1204.8,296.0 1205.0,296.0 1206.5,296.0 1208.0,296.0 1209.5,296.0 1209.6,296.0 1211.0,296.0 1211.2,296.0 1212.5,296.0 1214.0,296.0 1215.5,296.0 1216.1,296.0 1217.0,296.0 1217.7,296.0 1218.5,296.0 1219.5,296.0 1220.0,296.0 1221.3,296.0 1221.5,296.0 1223.0,296.0 1224.5,296.0 1224.6,296.0 1226.0,296.0 1227.5,296.0 1229.0,296.0 1230.3,296.0 1230.5,296.0 1231.9,296.0 1232.0,296.0 1233.5,296.0 1233.7,296.0 1235.0,300.0 1235.5,301.6 1236.5,304.7 1236.8,305.6 1237.1,305.6 1238.0,305.6 1238.1,305.6 1238.4,305.6 1239.5,302.8 1239.7,302.3 1241.0,299.0 1242.0,296.5 1242.5,296.5 1243.6,296.5 1244.0,296.8 1244.1,296.9 1245.5,298.1 1247.0,299.4 1248.5,300.6 1249.8,301.7 1250.0,301.7 1250.1,301.7 1251.4,301.7 1251.5,301.6 1253.0,300.0 1254.5,298.3 1255.0,297.8 1256.0,297.8 1256.6,297.8 1257.5,301.4 1259.0,307.3 1260.5,313.3 1261.0,315.3 1262.0,319.2 1262.8,322.4 1263.5,322.4 1264.4,322.4 1265.0,311.2 1265.3,305.6 1266.5,305.6 1266.9,305.6 1268.0,309.3 1269.2,313.3 1269.5,313.3 1270.0,313.3 1270.8,313.3 1271.0,312.4 1272.5,305.4 1274.0,298.4 1274.4,296.5 1275.5,296.5 1276.0,296.5 1277.0,296.9 1278.5,297.5 1280.0,298.1 1281.5,298.7 1282.2,299.0 1283.0,299.0 1283.8,299.0 1284.5,297.2 1284.8,296.5 1286.0,296.5 1286.4,296.5 1287.5,304.0 1289.0,314.2 1290.0,321.0 1290.5,321.0 1291.3,321.0 1291.6,321.0 1292.0,318.9 1292.9,314.1 1293.5,311.0 1295.0,303.1 1296.0,297.8 1296.5,297.4 1297.8,296.5 1298.0,296.5 1298.1,296.5 1299.4,296.5 1299.5,297.2 1301.0,307.3 1301.7,312.1 1302.5,317.5 1303.3,322.9 1303.8,326.3 1304.0,326.6 1305.5,329.1 1306.9,331.3 1307.0,331.5 1308.5,333.9 1309.4,335.4 1310.0,335.4 1311.0,335.4 1311.5,331.3 1313.0,318.9 1313.3,316.4 1314.5,306.4 1314.9,303.1 1315.4,299.0 1316.0,299.0 1317.5,299.0 1319.0,299.0 1319.8,299.0 1320.5,299.0 1320.6,299.0 1321.4,307.8 1322.0,314.4 1323.2,327.6 1323.5,330.9 1324.5,341.9 1325.0,352.6 1326.5,384.5 1327.6,408.0 1328.0,408.0 1329.2,408.0 1329.5,395.9 1330.2,367.8 1331.0,367.8 1331.8,367.8 1332.5,378.4 1333.6,395.0 1334.0,395.0 1335.2,395.0 1335.4,392.1 1335.5,390.6 1336.7,373.0 1337.0,373.0 1338.3,373.0 1338.5,376.8 1339.2,390.0 1339.3,390.0 1340.0,390.0 1340.8,390.0 1340.9,389.1 1341.5,384.0 1343.0,371.0 1344.5,358.0 1345.2,352.0 1346.0,342.7 1347.1,330.0 1347.5,325.4 1348.7,311.5 1349.0,308.1 1349.1,306.9 1350.5,306.9 1350.7,306.9 1351.0,310.4 1351.7,318.5 1352.0,318.5 1352.6,318.5 1353.3,318.5 1353.5,315.1 1354.2,303.0 1354.8,303.0 1355.0,303.0 1355.8,303.0 1356.4,313.7 1356.5,315.5 1358.0,342.3 1358.7,354.8 1359.5,354.8 1360.3,354.8 1361.0,343.1 1362.5,318.2 1363.8,296.5 1363.9,296.5 1364.0,296.5 1365.4,296.5 1365.5,297.3 1367.0,309.2 1368.5,321.2 1369.9,332.3 1370.0,333.1 1371.1,341.9 1371.5,348.4 1373.0,372.9 1374.2,392.4 1374.5,392.4 1375.1,392.4 1375.8,392.4 1376.0,389.3 1376.7,378.4 1376.8,376.9 1377.5,376.9 1378.2,376.9 1378.4,376.9 1379.0,380.7 1379.4,383.3 1379.8,383.3 1380.5,383.3 1381.0,383.3 1382.0,366.0 1382.1,364.3 1382.8,352.2 1383.5,340.3 1383.7,336.9 1385.0,314.8 1385.4,308.0 1386.0,308.0 1386.5,308.0 1387.0,308.0 1387.6,324.9 1388.0,336.2 1388.8,358.7 1389.5,350.1 1390.6,336.7 1390.6,336.7 1391.0,339.6 1392.2,348.4 1392.5,350.6 1394.0,361.5 1394.5,365.2 1394.6,365.5 1395.5,368.7 1397.0,373.9 1398.5,379.1 1399.7,383.3 1400.0,386.9 1401.0,398.9 1401.5,404.9 1403.0,422.8 1403.6,430.0 1404.5,432.3 1404.9,433.3 1406.0,436.1 1407.5,439.9 1408.7,443.0 1409.0,443.0 1410.3,443.0 1410.5,443.0 1412.0,443.0 1413.5,443.0 1414.4,443.0 1415.0,443.0 1415.2,443.0 1416.0,449.3 1416.5,453.3 1417.0,456.7 1418.0,457.2 1418.6,457.2 1419.5,453.9 1420.4,450.7 1421.0,450.3 1422.5,449.2 1424.0,448.1 1425.5,447.0 1425.6,446.9 1427.0,446.6 1428.5,446.2 1428.7,446.2 1430.0,445.9 1430.3,445.8 1431.3,445.6 1431.5,445.6 1432.1,445.6 1432.9,445.6 1433.0,446.6 1433.9,455.9 1434.5,455.9 1435.5,455.9 1436.0,455.5 1436.5,455.2 1437.5,454.5 1438.1,454.0 1439.0,453.4 1439.1,453.3 1440.5,453.3 1440.7,453.3 1442.0,461.4 1443.0,467.6 1443.5,467.6 1444.6,467.6 1445.0,461.5 1446.5,438.7 1446.9,432.6 1448.0,392.1 1448.5,373.7 1449.4,340.5 1449.5,340.5 1451.0,340.5 1452.5,383.7 1453.3,406.7 1454.0,406.7 1454.9,406.7 1455.5,398.6 1457.0,378.3 1457.2,375.6 1458.5,375.6 1458.8,375.6 1460.0,415.3 1460.6,435.2 1461.5,439.7 1463.0,447.2 1464.5,454.7 1465.0,457.2 1466.0,462.2 1466.3,463.7 1466.6,463.7 1467.5,463.7 1467.9,463.7 1469.0,442.6 1470.2,419.6 1470.5,419.6 1471.8,419.6 1472.0,422.5 1472.3,426.8 1473.5,444.2 1473.6,445.6 1475.0,466.5 1476.2,484.5 1476.5,485.2 1478.0,489.0 1478.8,491.0 1479.5,492.0 1481.0,494.2 1481.4,494.8 1482.5,494.8 1484.0,494.8 1485.5,494.8 1487.0,494.8 1488.5,494.8 1490.0,494.8 1491.5,494.8 1493.0,494.8 1494.5,494.8 1496.0,494.8 1497.0,494.8 1497.0,497.0 182.0,497.0" fill="#9abbcf"/>
<polygon points="182.0,496.0 182.0,496.0 183.0,490.0 183.5,488.1 185.0,486.1 186.0,488.0 186.5,485.9 188.0,474.8 189.0,472.8 189.5,472.5 190.6,472.8 191.0,474.1 192.0,482.0 192.5,480.1 194.0,486.6 195.0,489.6 195.5,486.3 197.0,488.7 198.5,486.5 200.0,486.6 201.5,488.6 203.0,491.1 204.5,486.8 206.0,487.4 207.5,489.9 209.0,491.8 210.5,489.6 212.0,488.5 213.5,492.0 215.0,486.4 216.5,491.3 218.0,487.8 219.5,487.0 221.0,486.8 222.5,488.0 224.0,491.0 225.5,487.2 227.0,489.6 228.5,489.9 230.0,488.3 231.5,489.4 233.0,486.5 234.5,486.5 236.0,487.3 237.5,490.2 239.0,488.7 240.5,488.0 242.0,489.6 243.5,488.8 245.0,487.9 246.5,490.9 248.0,490.3 249.5,487.6 251.0,489.5 252.0,489.6 252.5,488.9 254.0,488.0 255.5,480.9 255.7,479.0 257.0,477.2 257.3,479.0 258.5,488.9 259.0,489.6 260.0,486.8 261.5,488.6 263.0,490.6 264.5,487.0 266.0,489.0 267.5,486.3 269.0,490.1 270.5,490.7 272.0,489.5 273.5,491.4 275.0,488.0 276.5,490.3 278.0,489.7 279.5,489.6 281.0,488.8 282.5,491.1 284.0,491.8 285.5,488.9 287.0,490.1 288.5,486.5 290.0,490.3 291.5,490.0 293.0,492.1 294.5,491.0 296.0,487.8 297.5,488.4 299.0,490.1 300.0,489.6 300.5,485.4 302.0,485.5 303.5,481.2 304.5,482.0 305.0,483.2 306.0,494.0 306.5,494.0 308.0,494.0 309.5,494.0 311.0,494.0 312.5,494.0 314.0,494.0 315.5,494.0 317.0,494.0 318.5,494.0 320.0,494.0 321.5,494.0 322.6,494.0 323.0,489.6 324.5,489.1 326.0,480.5 327.0,480.0 327.5,466.3 328.2,452.0 329.0,450.8 329.8,452.0 330.5,455.2 332.0,453.5 333.0,458.5 333.5,458.9 335.0,463.3 336.5,469.1 338.0,472.5 338.7,472.8 339.5,474.5 340.3,472.8 341.0,470.1 342.5,469.2 344.0,467.1 344.7,467.6 345.5,469.4 347.0,469.8 348.5,465.0 349.9,467.6 350.0,465.5 351.5,471.6 353.0,477.3 354.5,484.5 355.0,487.0 356.0,487.1 357.5,485.1 359.0,483.6 360.5,486.1 362.0,485.9 363.5,487.1 365.0,489.4 366.5,487.9 368.0,486.9 369.5,487.5 371.0,487.9 372.5,484.2 374.0,489.3 375.5,488.6 377.0,489.2 378.5,488.8 380.0,486.4 381.5,486.4 383.0,484.7 384.5,487.9 386.0,484.5 387.5,484.6 389.0,485.4 390.5,485.2 392.0,486.3 393.5,484.6 395.0,484.3 396.5,485.2 398.0,485.0 399.5,486.6 401.0,484.6 402.5,489.7 404.0,488.2 405.5,485.4 407.0,486.1 408.5,486.7 410.0,486.8 411.5,485.4 413.0,489.8 414.5,490.6 416.0,487.5 417.5,487.7 419.0,485.3 420.0,488.3 420.5,474.3 421.0,466.0 422.0,483.1 422.2,488.3 423.5,486.4 423.8,488.3 425.0,489.2 426.5,484.4 428.0,482.8 429.5,487.6 431.0,484.3 432.5,481.2 434.0,482.8 435.5,478.9 436.0,482.0 437.0,481.7 437.6,482.0 438.5,486.2 440.0,487.0 441.5,487.7 443.0,485.1 444.5,485.7 446.0,484.5 447.5,488.1 449.0,486.7 450.5,488.2 452.0,485.5 453.0,487.0 453.5,477.1 454.0,471.5 455.0,472.9 455.6,471.5 456.5,486.4 456.9,489.6 458.0,491.2 459.5,490.9 461.0,491.0 462.5,490.5 464.0,487.5 465.5,489.2 465.9,489.6 466.0,484.5 467.0,483.1 468.5,481.2 470.0,481.2 471.5,482.7 473.0,482.6 474.5,485.2 476.0,486.7 477.5,483.7 479.0,486.6 480.5,486.9 481.5,484.5 482.0,457.5 482.3,437.8 483.3,483.0 483.5,481.7 485.0,480.8 486.5,480.9 488.0,480.7 489.5,480.7 491.0,483.2 492.5,484.9 494.0,484.5 495.5,482.4 495.8,483.0 497.0,460.8 497.1,458.5 498.5,460.4 500.0,459.7 501.5,457.3 503.0,461.3 503.6,461.1 504.5,464.6 506.0,466.5 506.6,466.3 507.5,467.3 508.2,466.3 509.0,464.8 510.5,461.4 512.0,463.5 513.1,461.1 513.5,459.6 514.7,461.1 515.0,463.2 515.7,463.7 516.5,466.0 517.3,463.7 518.0,444.8 519.5,406.7 520.2,390.0 521.0,392.2 521.8,390.0 522.2,427.4 522.5,428.2 523.8,427.4 524.0,421.8 525.5,397.7 525.6,398.9 527.0,383.1 528.5,373.5 530.0,357.4 531.5,354.8 531.6,357.4 533.0,383.0 533.4,388.5 534.5,408.4 536.0,430.4 537.5,452.5 538.6,471.5 539.0,476.1 539.9,487.0 540.5,484.1 542.0,483.0 543.5,488.3 545.0,486.0 546.5,484.8 548.0,486.9 549.0,484.5 549.5,479.8 550.7,471.5 551.0,473.2 552.3,471.5 552.5,474.5 554.0,484.5 555.5,482.5 557.0,482.8 558.5,482.4 560.0,484.5 561.5,482.6 563.0,483.5 564.5,481.8 566.0,486.5 567.5,483.1 569.0,483.7 569.7,484.5 570.5,481.3 571.0,479.3 572.0,488.4 572.8,492.2 573.5,491.2 574.4,492.2 575.0,493.1 576.5,487.9 578.0,485.4 579.5,482.6 580.1,481.9 581.0,475.2 582.5,472.3 584.0,465.3 585.5,458.7 585.8,461.1 587.0,462.4 587.4,461.1 588.5,466.0 590.0,477.9 590.5,481.9 591.5,483.1 593.0,482.5 594.5,481.6 594.8,483.2 596.0,482.8 596.4,483.2 597.5,483.0 599.0,484.3 600.5,480.2 602.0,483.0 603.4,380.7 603.5,386.1 604.8,484.5 605.0,482.6 606.5,485.3 608.0,483.3 609.5,483.3 611.0,484.2 612.5,484.7 614.0,481.6 615.5,482.3 616.4,481.9 617.0,480.8 618.5,479.1 620.0,478.5 621.5,475.4 623.0,474.2 623.4,474.1 624.5,473.5 625.0,474.1 626.0,477.0 627.5,475.9 628.6,476.7 629.0,476.7 630.2,476.7 630.5,476.2 632.0,476.7 633.5,474.2 634.6,470.4 635.0,469.3 636.5,470.9 636.6,471.0 637.0,485.0 638.0,485.0 638.6,485.0 639.5,473.3 640.9,455.0 641.0,455.0 642.5,455.0 644.0,458.6 644.8,460.5 645.5,460.5 646.4,460.5 647.0,457.6 648.5,450.4 649.4,446.0 650.0,446.0 651.0,446.0 651.5,449.2 653.0,458.6 653.3,460.5 654.5,452.1 654.6,451.4 656.0,468.6 656.4,473.5 657.5,473.5 658.0,473.5 659.0,443.2 659.8,419.0 660.5,417.3 662.0,413.6 662.4,412.6 663.5,412.6 664.0,412.6 665.0,424.2 666.5,424.2 666.6,424.2 668.0,398.0 668.4,390.5 669.5,384.9 670.2,381.4 671.0,381.4 671.8,381.4 672.5,409.5 672.8,421.6 674.0,421.6 674.4,421.6 675.4,407.4 675.5,407.4 677.0,407.4 678.5,423.4 679.3,432.0 680.0,434.9 681.5,441.2 682.4,445.0 683.0,445.0 684.0,445.0 684.5,439.1 685.0,433.3 686.0,433.3 686.6,433.3 687.5,434.5 687.6,434.6 688.4,475.4 689.0,470.3 690.5,457.0 691.5,445.6 692.0,447.8 693.1,445.6 693.5,446.5 694.9,458.5 695.0,458.4 696.5,462.0 697.9,461.1 698.0,462.6 699.5,461.1 701.0,449.1 702.5,441.8 703.1,439.0 704.0,435.9 704.7,439.0 705.5,447.9 706.5,463.7 707.0,460.6 708.1,463.7 708.5,459.4 709.6,445.6 710.0,446.8 711.2,445.6 711.5,448.6 713.0,449.5 714.5,458.2 714.8,458.5 716.0,459.0 716.4,458.5 717.5,453.4 718.7,453.3 719.0,455.1 720.3,453.3 720.5,459.2 721.3,471.5 722.0,469.3 722.9,471.5 723.5,471.2 725.0,461.6 726.5,455.9 728.0,452.6 729.1,445.6 729.5,447.1 730.7,445.6 731.0,452.4 731.7,476.7 732.5,475.8 733.3,476.7 734.0,467.6 735.5,448.0 735.6,448.2 737.0,445.9 737.2,448.2 738.5,448.9 740.0,454.0 741.5,455.9 742.8,445.6 743.0,448.3 744.5,469.2 744.6,471.5 746.0,468.1 746.2,471.5 747.5,453.9 748.5,443.0 749.0,443.2 750.1,443.0 750.5,443.9 752.0,446.2 753.5,456.8 755.0,460.6 756.3,463.7 756.5,466.0 757.9,463.7 758.0,460.6 759.5,458.3 761.0,453.7 761.5,455.9 762.5,457.1 763.1,455.9 764.0,454.7 765.5,455.0 767.0,457.8 768.5,461.9 770.0,462.4 770.1,461.1 771.5,464.1 773.0,468.8 774.5,476.7 776.0,476.6 776.1,476.7 777.5,474.4 779.0,467.5 779.7,468.9 780.5,465.7 781.3,468.9 782.0,471.1 783.5,472.9 784.8,476.7 785.0,473.6 786.4,476.7 786.5,478.4 788.0,469.7 789.5,463.8 791.0,452.6 792.5,450.3 792.6,448.2 794.0,445.1 794.2,448.2 795.5,464.0 797.0,477.9 797.3,481.9 798.5,480.4 800.0,481.7 801.2,481.9 801.5,483.4 803.0,476.6 804.5,472.9 806.0,472.5 807.5,467.9 809.0,464.3 810.5,461.7 810.8,463.7 812.0,460.5 812.4,463.7 813.4,479.3 813.5,477.0 815.0,479.3 816.5,475.9 818.0,476.8 819.4,474.1 819.5,473.2 820.0,479.3 821.0,479.0 822.5,477.3 824.0,478.6 825.5,476.9 827.0,480.6 828.5,477.2 828.6,480.6 830.0,477.5 830.9,474.1 831.5,473.9 832.5,474.1 833.0,472.2 834.5,475.1 835.6,476.7 836.0,478.8 837.5,473.8 839.0,478.1 840.5,475.8 840.8,476.7 842.0,473.4 843.5,471.9 845.0,465.8 846.4,463.7 846.5,463.2 848.0,463.7 849.0,471.5 849.5,473.9 850.6,471.5 851.0,468.0 852.5,463.3 852.9,459.8 854.0,460.5 854.5,459.8 855.5,467.5 856.8,476.7 857.0,475.6 858.4,476.7 858.5,474.6 860.0,461.8 860.7,459.8 861.5,457.1 862.3,459.8 863.0,461.9 864.5,476.9 864.6,476.7 866.0,474.7 866.2,476.7 867.5,464.6 868.5,459.8 869.0,456.8 870.1,459.8 870.5,461.8 872.0,463.5 873.5,463.9 875.0,463.2 876.5,464.6 878.0,466.5 879.5,469.1 881.0,468.9 882.3,472.8 882.5,472.0 884.0,471.3 885.5,475.9 887.0,476.4 888.5,474.3 890.0,472.9 891.5,477.6 891.8,475.4 893.0,473.8 893.4,475.4 894.5,473.8 896.0,471.3 897.5,473.3 899.0,473.5 899.1,474.1 900.5,468.0 902.0,460.2 903.0,458.5 903.5,457.9 905.0,454.6 906.5,455.8 908.0,454.4 908.7,457.2 909.5,456.1 910.3,457.2 911.0,456.4 912.5,461.6 914.0,468.6 914.7,472.8 915.5,471.4 917.0,474.9 918.5,475.8 919.1,476.7 920.0,477.7 920.7,476.7 921.5,475.3 923.0,472.3 924.5,469.8 926.0,463.4 926.4,463.7 927.5,461.6 929.0,464.8 930.5,459.0 932.0,461.7 933.5,460.5 934.1,459.8 935.0,454.5 936.5,455.7 938.0,450.7 939.5,450.4 941.0,450.4 942.5,450.3 944.0,445.7 945.5,447.4 947.0,446.7 947.6,446.9 948.5,448.4 949.2,446.9 950.0,449.5 951.5,452.0 953.0,452.9 954.5,457.1 954.9,455.9 956.0,457.2 957.5,458.1 959.0,456.2 960.5,455.9 961.4,459.8 962.0,457.1 963.5,458.5 965.0,456.9 966.5,461.3 968.0,459.7 969.2,459.8 969.5,460.4 971.0,462.2 972.5,464.4 973.5,465.0 974.0,464.4 975.1,465.0 975.5,460.9 977.0,463.3 978.5,460.6 980.0,457.2 981.5,456.9 981.6,457.2 983.0,462.2 984.5,463.5 985.2,468.9 986.0,469.8 986.8,468.9 987.5,464.1 989.0,457.1 989.1,459.8 990.5,457.9 990.7,459.8 992.0,461.4 993.5,459.0 995.0,463.0 995.6,462.4 996.5,464.8 997.2,462.4 998.0,458.9 999.5,452.7 1001.0,447.7 1002.1,444.3 1002.5,444.9 1003.7,444.3 1004.0,447.6 1005.5,457.6 1006.0,461.1 1007.0,461.5 1007.6,461.1 1008.5,456.6 1009.2,458.5 1010.0,455.9 1010.8,458.5 1011.5,462.0 1011.8,466.3 1013.0,467.3 1013.4,466.3 1014.5,459.7 1015.7,455.9 1016.0,455.8 1017.3,455.9 1017.5,453.8 1019.0,463.8 1020.5,474.8 1020.9,479.3 1022.0,479.8 1022.5,479.3 1023.5,479.5 1025.0,478.8 1025.6,478.0 1026.5,472.9 1028.0,468.6 1029.5,462.6 1031.0,457.0 1032.5,452.0 1034.0,453.9 1034.1,452.0 1035.5,461.6 1036.4,471.5 1037.0,473.9 1038.0,471.5 1038.5,470.8 1040.0,456.8 1040.3,458.5 1041.5,457.8 1041.9,458.5 1043.0,466.1 1044.2,471.5 1044.5,473.8 1045.8,471.5 1046.0,470.0 1047.5,463.5 1047.6,465.0 1049.0,462.8 1049.2,465.0 1050.5,471.0 1052.0,470.9 1053.5,477.5 1054.1,479.3 1055.0,477.1 1056.5,480.0 1058.0,483.3 1059.5,479.1 1059.8,481.9 1061.0,483.3 1061.4,481.9 1062.5,478.3 1063.7,475.4 1064.0,477.2 1065.3,475.4 1065.5,476.9 1067.0,480.0 1067.6,484.5 1068.5,486.4 1069.2,484.5 1070.0,483.3 1071.5,479.3 1073.0,478.0 1074.5,479.7 1076.0,478.3 1077.4,478.0 1077.5,476.2 1079.0,473.0 1080.5,472.0 1082.0,469.6 1083.5,470.5 1084.4,467.6 1085.0,464.1 1086.0,467.6 1086.5,468.7 1088.0,469.6 1089.5,465.6 1091.0,470.8 1091.7,468.9 1092.5,471.7 1094.0,476.6 1095.5,476.7 1097.0,480.9 1097.4,483.2 1098.5,482.1 1099.0,483.2 1100.0,485.6 1101.5,482.9 1103.0,481.4 1104.5,481.6 1106.0,480.5 1107.5,479.0 1109.0,479.1 1109.9,481.9 1110.5,481.1 1112.0,472.0 1113.5,470.1 1115.0,460.1 1115.6,459.8 1116.5,457.9 1117.2,459.8 1118.0,460.0 1119.5,459.4 1121.0,461.8 1122.5,466.6 1123.3,465.0 1124.0,466.8 1124.9,465.0 1125.5,466.0 1127.0,463.8 1128.5,464.5 1130.0,463.6 1131.5,460.2 1132.4,459.8 1133.0,460.6 1134.0,459.8 1134.5,457.3 1136.0,463.6 1137.5,464.2 1138.4,466.3 1139.0,469.5 1140.5,474.3 1142.0,477.6 1143.5,481.6 1144.1,487.0 1145.0,489.1 1145.7,487.0 1146.5,484.0 1148.0,485.7 1149.5,484.4 1150.1,485.7 1151.0,476.1 1152.5,465.6 1153.2,458.5 1154.0,460.9 1154.8,458.5 1155.5,457.0 1157.0,460.4 1158.5,459.3 1160.0,461.9 1160.5,462.4 1161.5,467.8 1163.0,476.2 1163.5,481.9 1164.5,479.4 1165.1,481.9 1166.0,472.8 1167.5,465.6 1168.7,454.6 1169.0,454.1 1170.3,454.6 1170.5,457.4 1171.3,479.3 1172.0,481.2 1172.9,479.3 1173.5,480.2 1175.0,472.9 1176.5,467.1 1177.8,466.3 1178.0,464.0 1179.4,466.3 1179.5,463.9 1181.0,473.0 1181.7,478.0 1182.5,475.0 1183.3,478.0 1184.0,474.6 1185.5,471.9 1187.0,470.9 1188.5,469.9 1190.0,466.2 1190.8,463.7 1191.5,462.7 1192.4,463.7 1193.0,465.7 1194.5,474.0 1194.7,475.4 1196.0,474.2 1196.3,475.4 1197.5,434.8 1198.0,420.0 1199.0,392.7 1200.5,357.8 1200.7,354.8 1202.0,420.0 1203.2,478.0 1203.5,475.3 1204.8,478.0 1205.0,477.4 1206.5,476.9 1208.0,477.1 1209.5,472.0 1209.6,474.1 1211.0,472.2 1211.2,474.1 1212.5,472.8 1214.0,474.5 1215.5,475.6 1216.1,476.7 1217.0,478.9 1217.7,476.7 1218.5,452.9 1219.5,419.6 1220.0,390.7 1221.3,309.4 1221.5,306.6 1223.0,310.8 1224.5,319.0 1224.6,318.5 1226.0,330.0 1227.5,380.0 1229.0,460.0 1230.3,471.5 1230.5,468.0 1231.9,471.5 1232.0,469.7 1233.5,463.2 1235.0,452.9 1235.5,448.2 1236.5,449.8 1237.1,448.2 1238.0,464.5 1238.1,463.7 1239.5,461.7 1239.7,463.7 1241.0,457.4 1242.5,453.7 1244.0,451.9 1244.1,452.0 1245.5,451.4 1247.0,451.6 1248.5,448.2 1250.0,448.6 1250.1,448.2 1251.5,456.7 1253.0,462.8 1254.5,471.5 1256.0,468.8 1257.5,473.9 1259.0,471.2 1260.5,475.9 1261.0,474.1 1262.0,475.1 1263.5,473.9 1265.0,473.8 1265.3,476.7 1266.5,474.7 1266.9,476.7 1268.0,470.6 1269.5,462.1 1270.0,458.5 1271.0,455.1 1272.5,453.9 1274.0,455.8 1274.4,455.9 1275.5,455.9 1276.0,455.9 1277.0,457.7 1278.5,461.2 1280.0,467.9 1281.5,468.8 1283.0,476.7 1284.5,476.4 1286.0,479.9 1287.5,478.5 1289.0,480.4 1290.5,478.4 1291.3,479.3 1292.0,477.2 1292.9,479.3 1293.5,474.2 1295.0,470.9 1296.5,461.1 1298.0,459.4 1298.1,461.1 1299.5,464.8 1301.0,475.3 1301.7,479.3 1302.5,479.8 1303.3,479.3 1304.0,475.8 1305.5,469.4 1306.9,466.3 1307.0,466.8 1308.5,466.3 1310.0,466.6 1311.5,467.9 1313.0,472.1 1313.3,474.1 1314.5,473.1 1314.9,474.1 1316.0,468.9 1317.5,458.0 1319.0,453.7 1319.8,448.2 1320.5,449.1 1321.4,448.2 1322.0,448.6 1323.2,450.7 1323.5,450.6 1325.0,466.3 1326.5,473.4 1327.6,483.2 1328.0,484.6 1329.2,483.2 1329.5,479.4 1331.0,471.2 1332.5,466.3 1334.0,455.3 1335.4,449.4 1335.5,451.6 1337.0,449.4 1338.5,453.8 1339.3,459.8 1340.0,457.6 1340.9,459.8 1341.5,458.0 1343.0,457.6 1344.5,457.5 1346.0,450.8 1347.1,452.0 1347.5,450.9 1348.7,452.0 1349.0,451.1 1350.5,462.5 1351.0,462.4 1352.0,459.8 1352.6,462.4 1353.5,457.1 1354.8,457.2 1355.0,454.1 1356.4,457.2 1356.5,456.3 1358.0,462.7 1359.5,466.0 1361.0,468.5 1362.5,473.4 1363.9,474.1 1364.0,476.2 1365.5,474.1 1367.0,461.6 1368.5,455.9 1369.9,444.3 1370.0,445.1 1371.5,438.6 1373.0,440.1 1374.5,436.2 1375.1,436.5 1376.0,435.2 1376.7,436.5 1377.5,445.3 1378.2,455.9 1379.0,453.4 1379.8,455.9 1380.5,450.8 1382.0,449.1 1382.1,450.7 1383.5,449.3 1383.7,450.7 1385.0,455.9 1386.0,455.9 1386.5,453.1 1387.6,455.9 1388.0,455.6 1389.5,441.4 1390.6,436.5 1391.0,435.1 1392.2,436.5 1392.5,441.0 1394.0,456.4 1394.6,461.1 1395.5,460.2 1397.0,457.9 1398.5,460.4 1400.0,459.8 1401.0,461.1 1401.5,464.5 1403.0,464.1 1404.5,469.1 1404.9,471.5 1406.0,479.8 1407.5,483.2 1408.7,493.5 1409.0,493.5 1410.3,493.5 1410.5,490.5 1412.0,478.2 1413.5,463.2 1414.4,453.3 1415.0,450.0 1416.0,453.3 1416.5,455.7 1418.0,462.8 1419.5,466.6 1420.4,474.1 1421.0,471.8 1422.5,479.1 1424.0,477.2 1425.5,482.2 1427.0,485.2 1428.5,484.0 1428.7,485.7 1430.0,483.8 1430.3,485.7 1431.5,480.2 1432.1,474.1 1433.0,473.0 1434.5,468.6 1436.0,469.1 1436.5,467.6 1437.5,466.0 1438.1,467.6 1439.0,467.9 1440.5,469.9 1442.0,477.9 1443.0,479.3 1443.5,481.3 1444.6,479.3 1445.0,479.4 1446.5,480.4 1446.9,478.0 1448.0,474.6 1448.5,478.0 1449.5,477.5 1451.0,481.4 1452.5,486.7 1453.3,485.7 1454.0,487.9 1454.9,485.7 1455.5,484.3 1457.0,482.8 1458.5,483.2 1460.0,482.9 1460.6,483.2 1461.5,484.5 1463.0,478.7 1464.5,481.1 1465.0,479.3 1466.0,480.2 1466.6,479.3 1467.5,481.6 1469.0,482.6 1470.5,483.0 1472.0,482.7 1472.3,484.5 1473.5,484.9 1475.0,487.7 1476.2,491.0 1476.5,492.7 1478.0,494.1 1478.8,495.5 1479.5,495.5 1481.0,495.5 1482.5,495.6 1484.0,495.6 1485.5,495.6 1487.0,495.6 1488.5,495.7 1490.0,495.7 1491.5,495.7 1493.0,495.7 1494.5,495.8 1496.0,495.8 1497.0,495.8 1497.0,497.0 182.0,497.0" fill="#226fa6" stroke="#9fc2d8" stroke-width="1.1" stroke-linejoin="round"/>
<polygon points="161.5,497.0 161.5,495.9 524.0,495.9 528.0,494.6 536.0,494.8 540.0,495.9 643.0,495.9 648.0,494.2 655.0,493.5 661.0,492.8 664.0,491.8 668.0,493.0 676.0,493.6 684.0,495.9 1196.0,495.9 1198.0,490.0 1200.5,485.7 1203.0,495.9 1219.0,495.9 1221.0,482.0 1224.0,484.0 1228.5,495.9 1497.0,495.9 1497.0,497.0" fill="#2e9c33"/>
<path d="M161.5 291V501M158 497.5H1503" stroke="#5a5a5a" stroke-width="1" fill="none"/>
<rect x="161.5" y="495" width="21" height="1" fill="#9fc3dc"/>
<polygon points="158.3,291.3 164.8,291.3 161.5,286.5" fill="#f2f2f2"/>
<polygon points="1503.3,494 1503.3,500.8 1509,497.4" fill="#f2f2f2"/>
<text x="630.0" y="284.3" font-family="Liberation Sans" font-size="14.94" fill="#ececec" textLength="346.6" lengthAdjust="spacing">nasbuild.dbhub.io: CPU utilisation (8h 39m 52s)</text>
<text x="119.5" y="300.2" font-family="Liberation Sans" font-size="10.92" fill="#ececec" textLength="33.7" lengthAdjust="spacing">100 %</text>
<text x="126.2" y="340.2" font-family="Liberation Sans" font-size="10.92" fill="#ececec" textLength="27.0" lengthAdjust="spacing">80 %</text>
<text x="126.2" y="380.2" font-family="Liberation Sans" font-size="10.92" fill="#ececec" textLength="27.0" lengthAdjust="spacing">60 %</text>
<text x="126.2" y="420.2" font-family="Liberation Sans" font-size="10.92" fill="#ececec" textLength="27.0" lengthAdjust="spacing">40 %</text>
<text x="126.2" y="460.2" font-family="Liberation Sans" font-size="10.92" fill="#ececec" textLength="27.0" lengthAdjust="spacing">20 %</text>
<text x="133.0" y="500.2" font-family="Liberation Sans" font-size="10.92" fill="#ececec" textLength="20.2" lengthAdjust="spacing">0 %</text>
<text transform="translate(174.3 525.3) rotate(-90)" font-family="Liberation Sans" font-size="9.9" fill="#f2f2f2" textLength="24.7" lengthAdjust="spacingAndGlyphs">19:15</text>
<text transform="translate(212.9 525.3) rotate(-90)" font-family="Liberation Sans" font-size="9.9" fill="#f2f2f2" textLength="24.7" lengthAdjust="spacingAndGlyphs">19:30</text>
<text transform="translate(251.4 525.3) rotate(-90)" font-family="Liberation Sans" font-size="9.9" fill="#f2f2f2" textLength="24.7" lengthAdjust="spacingAndGlyphs">19:45</text>
<text transform="translate(290.2 530.8) rotate(-90)" font-family="Liberation Sans" font-size="11.2" fill="#e45959" textLength="30.2" lengthAdjust="spacingAndGlyphs">20:00</text>
<text transform="translate(328.6 525.3) rotate(-90)" font-family="Liberation Sans" font-size="9.9" fill="#f2f2f2" textLength="24.7" lengthAdjust="spacingAndGlyphs">20:15</text>
<text transform="translate(367.2 525.3) rotate(-90)" font-family="Liberation Sans" font-size="9.9" fill="#f2f2f2" textLength="24.7" lengthAdjust="spacingAndGlyphs">20:30</text>
<text transform="translate(405.7 525.3) rotate(-90)" font-family="Liberation Sans" font-size="9.9" fill="#f2f2f2" textLength="24.7" lengthAdjust="spacingAndGlyphs">20:45</text>
<text transform="translate(444.5 530.8) rotate(-90)" font-family="Liberation Sans" font-size="11.2" fill="#e45959" textLength="30.2" lengthAdjust="spacingAndGlyphs">21:00</text>
<text transform="translate(482.9 525.3) rotate(-90)" font-family="Liberation Sans" font-size="9.9" fill="#f2f2f2" textLength="24.7" lengthAdjust="spacingAndGlyphs">21:15</text>
<text transform="translate(521.4 525.3) rotate(-90)" font-family="Liberation Sans" font-size="9.9" fill="#f2f2f2" textLength="24.7" lengthAdjust="spacingAndGlyphs">21:30</text>
<text transform="translate(560.0 525.3) rotate(-90)" font-family="Liberation Sans" font-size="9.9" fill="#f2f2f2" textLength="24.7" lengthAdjust="spacingAndGlyphs">21:45</text>
<text transform="translate(598.8 530.8) rotate(-90)" font-family="Liberation Sans" font-size="11.2" fill="#e45959" textLength="30.2" lengthAdjust="spacingAndGlyphs">22:00</text>
<text transform="translate(637.1 525.3) rotate(-90)" font-family="Liberation Sans" font-size="9.9" fill="#f2f2f2" textLength="24.7" lengthAdjust="spacingAndGlyphs">22:15</text>
<text transform="translate(675.7 525.3) rotate(-90)" font-family="Liberation Sans" font-size="9.9" fill="#f2f2f2" textLength="24.7" lengthAdjust="spacingAndGlyphs">22:30</text>
<text transform="translate(714.3 525.3) rotate(-90)" font-family="Liberation Sans" font-size="9.9" fill="#f2f2f2" textLength="24.7" lengthAdjust="spacingAndGlyphs">22:45</text>
<text transform="translate(753.0 530.8) rotate(-90)" font-family="Liberation Sans" font-size="11.2" fill="#e45959" textLength="30.2" lengthAdjust="spacingAndGlyphs">23:00</text>
<text transform="translate(791.4 525.3) rotate(-90)" font-family="Liberation Sans" font-size="9.9" fill="#f2f2f2" textLength="24.7" lengthAdjust="spacingAndGlyphs">23:15</text>
<text transform="translate(830.0 525.3) rotate(-90)" font-family="Liberation Sans" font-size="9.9" fill="#f2f2f2" textLength="24.7" lengthAdjust="spacingAndGlyphs">23:30</text>
<text transform="translate(868.6 525.3) rotate(-90)" font-family="Liberation Sans" font-size="9.9" fill="#f2f2f2" textLength="24.7" lengthAdjust="spacingAndGlyphs">23:45</text>
<text transform="translate(907.3 530.8) rotate(-90)" font-family="Liberation Sans" font-size="11.2" fill="#e45959" textLength="30.2" lengthAdjust="spacingAndGlyphs">01-13</text>
<text transform="translate(945.7 525.3) rotate(-90)" font-family="Liberation Sans" font-size="9.9" fill="#f2f2f2" textLength="24.7" lengthAdjust="spacingAndGlyphs">00:15</text>
<text transform="translate(984.3 525.3) rotate(-90)" font-family="Liberation Sans" font-size="9.9" fill="#f2f2f2" textLength="24.7" lengthAdjust="spacingAndGlyphs">00:30</text>
<text transform="translate(1022.8 525.3) rotate(-90)" font-family="Liberation Sans" font-size="9.9" fill="#f2f2f2" textLength="24.7" lengthAdjust="spacingAndGlyphs">00:45</text>
<text transform="translate(1061.6 530.8) rotate(-90)" font-family="Liberation Sans" font-size="11.2" fill="#e45959" textLength="30.2" lengthAdjust="spacingAndGlyphs">01:00</text>
<text transform="translate(1100.0 525.3) rotate(-90)" font-family="Liberation Sans" font-size="9.9" fill="#f2f2f2" textLength="24.7" lengthAdjust="spacingAndGlyphs">01:15</text>
<text transform="translate(1138.5 525.3) rotate(-90)" font-family="Liberation Sans" font-size="9.9" fill="#f2f2f2" textLength="24.7" lengthAdjust="spacingAndGlyphs">01:30</text>
<text transform="translate(1177.1 525.3) rotate(-90)" font-family="Liberation Sans" font-size="9.9" fill="#f2f2f2" textLength="24.7" lengthAdjust="spacingAndGlyphs">01:45</text>
<text transform="translate(1215.9 530.8) rotate(-90)" font-family="Liberation Sans" font-size="11.2" fill="#e45959" textLength="30.2" lengthAdjust="spacingAndGlyphs">02:00</text>
<text transform="translate(1254.3 525.3) rotate(-90)" font-family="Liberation Sans" font-size="9.9" fill="#f2f2f2" textLength="24.7" lengthAdjust="spacingAndGlyphs">02:15</text>
<text transform="translate(1292.8 525.3) rotate(-90)" font-family="Liberation Sans" font-size="9.9" fill="#f2f2f2" textLength="24.7" lengthAdjust="spacingAndGlyphs">02:30</text>
<text transform="translate(1331.4 525.3) rotate(-90)" font-family="Liberation Sans" font-size="9.9" fill="#f2f2f2" textLength="24.7" lengthAdjust="spacingAndGlyphs">02:45</text>
<text transform="translate(1370.2 530.8) rotate(-90)" font-family="Liberation Sans" font-size="11.2" fill="#e45959" textLength="30.2" lengthAdjust="spacingAndGlyphs">03:00</text>
<text transform="translate(1408.5 525.3) rotate(-90)" font-family="Liberation Sans" font-size="9.9" fill="#f2f2f2" textLength="24.7" lengthAdjust="spacingAndGlyphs">03:15</text>
<text transform="translate(1447.1 525.3) rotate(-90)" font-family="Liberation Sans" font-size="9.9" fill="#f2f2f2" textLength="24.7" lengthAdjust="spacingAndGlyphs">03:30</text>
<text transform="translate(1485.7 525.3) rotate(-90)" font-family="Liberation Sans" font-size="9.9" fill="#f2f2f2" textLength="24.7" lengthAdjust="spacingAndGlyphs">03:45</text>
<text transform="translate(165.4 567.1) rotate(-90)" font-family="Liberation Sans" font-size="11.7" fill="#e45959" textLength="66.7" lengthAdjust="spacingAndGlyphs">01-12 19:11</text>
<text transform="translate(1502.9 566.7) rotate(-90)" font-family="Liberation Sans" font-size="11.7" fill="#e45959" textLength="65.8" lengthAdjust="spacingAndGlyphs">01-13 03:50</text>
<text transform="translate(1528 614.8) rotate(-90)" font-family="Liberation Mono" font-size="9" fill="#8f8f8f" textLength="105.8" lengthAdjust="spacingAndGlyphs">http://www.zabbix.com</text>
<text x="1357.8" y="659.8" font-family="Liberation Sans" font-size="8.34" fill="#8a8a8a" textLength="167.9" lengthAdjust="spacing">Data from history. Generated in 0.26 sec.</text>
<text x="306.4" y="585.8" font-family="Liberation Sans" font-size="12.36" fill="#ececec" textLength="21.6" lengthAdjust="spacing">last</text>
<text x="373.9" y="585.8" font-family="Liberation Sans" font-size="12.36" fill="#ececec" textLength="22.6" lengthAdjust="spacing">min</text>
<text x="439.4" y="585.8" font-family="Liberation Sans" font-size="12.36" fill="#ececec" textLength="22.1" lengthAdjust="spacing">avg</text>
<text x="502.1" y="585.8" font-family="Liberation Sans" font-size="12.36" fill="#ececec" textLength="26.2" lengthAdjust="spacing">max</text>
<rect x="91.5" y="591.0" width="10" height="10" fill="#9abbcf" stroke="#555" stroke-width="0.6"/>
<text x="107.2" y="600.2" font-family="Liberation Sans" font-size="12.57" fill="#ececec" textLength="86.7" lengthAdjust="spacing">CPU user time</text>
<text x="241.1" y="600.2" font-family="Liberation Sans" font-size="12.36" fill="#ececec" textLength="29.4" lengthAdjust="spacing">[avg]</text>
<text x="288.6" y="600.2" font-family="Liberation Sans" font-size="12.36" fill="#ececec" textLength="57.2" lengthAdjust="spacing">0.0031 %</text>
<text x="384.3" y="600.2" font-family="Liberation Sans" font-size="12.36" fill="#ececec" textLength="22.9" lengthAdjust="spacing">0 %</text>
<text x="445.5" y="600.2" font-family="Liberation Sans" font-size="12.36" fill="#ececec" textLength="30.5" lengthAdjust="spacing">64 %</text>
<text x="495.3" y="600.2" font-family="Liberation Sans" font-size="12.36" fill="#ececec" textLength="42.0" lengthAdjust="spacing">97.3 %</text>
<rect x="91.5" y="605.0" width="10" height="10" fill="#226fa6" stroke="#555" stroke-width="0.6"/>
<text x="107.2" y="614.2" font-family="Liberation Sans" font-size="12.57" fill="#ececec" textLength="104.2" lengthAdjust="spacing">CPU system time</text>
<text x="241.1" y="614.2" font-family="Liberation Sans" font-size="12.36" fill="#ececec" textLength="29.4" lengthAdjust="spacing">[avg]</text>
<text x="303.8" y="614.2" font-family="Liberation Sans" font-size="12.36" fill="#ececec" textLength="42.0" lengthAdjust="spacing">0.08 %</text>
<text x="365.2" y="614.2" font-family="Liberation Sans" font-size="12.36" fill="#ececec" textLength="42.0" lengthAdjust="spacing">0.05 %</text>
<text x="426.4" y="614.2" font-family="Liberation Sans" font-size="12.36" fill="#ececec" textLength="49.6" lengthAdjust="spacing">13.71 %</text>
<text x="495.3" y="614.2" font-family="Liberation Sans" font-size="12.36" fill="#ececec" textLength="42.0" lengthAdjust="spacing">88.4 %</text>
<rect x="91.5" y="619.0" width="10" height="10" fill="#a6d58a" stroke="#555" stroke-width="0.6"/>
<text x="107.2" y="628.2" font-family="Liberation Sans" font-size="12.57" fill="#ececec" textLength="85.4" lengthAdjust="spacing">CPU nice time</text>
<text x="241.1" y="628.2" font-family="Liberation Sans" font-size="12.36" fill="#ececec" textLength="29.4" lengthAdjust="spacing">[avg]</text>
<text x="322.9" y="628.2" font-family="Liberation Sans" font-size="12.36" fill="#ececec" textLength="22.9" lengthAdjust="spacing">0 %</text>
<text x="384.3" y="628.2" font-family="Liberation Sans" font-size="12.36" fill="#ececec" textLength="22.9" lengthAdjust="spacing">0 %</text>
<text x="453.1" y="628.2" font-family="Liberation Sans" font-size="12.36" fill="#ececec" textLength="22.9" lengthAdjust="spacing">0 %</text>
<text x="514.4" y="628.2" font-family="Liberation Sans" font-size="12.36" fill="#ececec" textLength="22.9" lengthAdjust="spacing">0 %</text>
<rect x="91.5" y="633.0" width="10" height="10" fill="#2e9c33" stroke="#555" stroke-width="0.6"/>
<text x="107.2" y="642.2" font-family="Liberation Sans" font-size="12.57" fill="#ececec" textLength="113.6" lengthAdjust="spacing">CPU interrupt time</text>
<text x="241.1" y="642.2" font-family="Liberation Sans" font-size="12.36" fill="#ececec" textLength="29.4" lengthAdjust="spacing">[avg]</text>
<text x="303.8" y="642.2" font-family="Liberation Sans" font-size="12.36" fill="#ececec" textLength="42.0" lengthAdjust="spacing">0.05 %</text>
<text x="365.2" y="642.2" font-family="Liberation Sans" font-size="12.36" fill="#ececec" textLength="42.0" lengthAdjust="spacing">0.02 %</text>
<text x="434.0" y="642.2" font-family="Liberation Sans" font-size="12.36" fill="#ececec" textLength="42.0" lengthAdjust="spacing">0.32 %</text>
<text x="495.3" y="642.2" font-family="Liberation Sans" font-size="12.36" fill="#ececec" textLength="42.0" lengthAdjust="spacing">7.82 %</text>
</svg>
 <div class="a" style="left:0;top:668px;width:1492px;text-align:center;font-size:12px;color:#9c9c9c;padding-left:0">Zabbix 3.2.1. &copy; 2001&ndash;2016, <span style="border-bottom:1px solid #6a6a6a">Zabbix SIA</span></div>
</div>
</body></html>
